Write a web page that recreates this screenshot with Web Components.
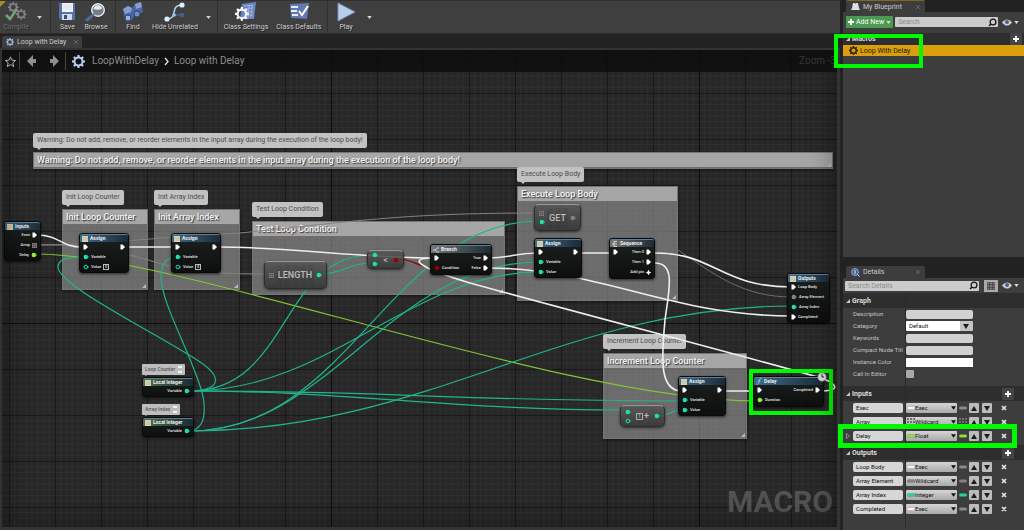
<!DOCTYPE html>
<html lang="en">
<head>
<meta charset="utf-8">
<title>Loop with Delay</title>
<style>
html, body { margin: 0; height: 100%; }
body { background: #222; color: #c4c4c4; font: 7px/10px Roboto, "Liberation Sans", sans-serif; overflow: hidden; }
</style>
</head>
<body>
<bp-editor></bp-editor>
<script>
const gearPath = 'M6.8 0h2.4l.4 2.2 1.5.6L13 1.5 14.600 3.1 13.300 4.900l.6 1.500 2.100.4v2.400l-2.200.4-.6 1.500 1.300 1.900-1.700 1.600-1.800-1.300-1.500.6-.4 2.100H6.800l-.4-2.200-1.500-.6L3 14.500 1.400 12.900l1.300-1.800-.6-1.500L0 9.200V6.800l2.200-.4.6-1.500L1.500 3 3.100 1.400l1.800 1.300 1.500-.6zM8 4.300a3.700 3.700 0 1 0 0 7.400 3.700 3.700 0 0 0 0-7.400z';
const svg = (w, h, box, body) => `<svg width="${w}" height="${h}" viewBox="${box}" aria-hidden="true">${body}</svg>`;
const icons = {
  gear: (s, c) => svg(s, s, '0 0 16 16', `<path fill="${c}" fill-rule="evenodd" d="${gearPath}"/>`),
  compile: () => svg(22, 20, '0 0 22 20', `<g fill="#858585" fill-rule="evenodd"><path transform="translate(3 0) scale(.66)" d="${gearPath}"/><path transform="translate(11 7) scale(.66)" d="${gearPath}"/></g><path d="M1 13l4 4L12 7" fill="none" stroke="#75a078" stroke-width="2.500"/>`),
  save: () => svg(18, 20, '0 0 18 20', '<path d="M1 1h16v17H3l-2-2z" fill="#5472ac"/><path d="M4 1h11v9H4z" fill="#f3f5f8"/><path d="M5 3h9M5 5h9M5 7h9" stroke="#c9cfda" stroke-width=".6"/><path d="M4 12h10v6H4z" fill="#d5dbe6"/><path d="M6 13h3v4H6z" fill="#38517f"/>'),
  browse: () => svg(22, 20, '0 0 22 20', '<circle cx="13" cy="8" r="7.500" fill="#111"/><circle cx="13" cy="8" r="6.300" fill="#777d87" stroke="#e8edf5" stroke-width="1.500"/><path d="M8.500 7a4.600 4.600 0 0 1 8.800-.8c-3 2-6 2-8.800.8z" fill="#e4e8ee"/><path d="M8 13l-6 5" stroke="#4f68a0" stroke-width="3" stroke-linecap="round"/>'),
  find: () => svg(22, 20, '0 0 22 20', '<path d="M1 7l5-3 4 2 3-4 6-2 2 10-3 2-4-1-2 3-2 4-4 2-3-2z" fill="#4966a5"/><path d="M1 7l5-3 4 2-1 4-6 2zM13 2l6-2 1 5-6 2z" fill="#849ed1"/><circle cx="6" cy="16" r="3" fill="#9bb2dc" stroke="#2b4272"/><circle cx="15" cy="12" r="3" fill="#718dc4" stroke="#2b4272"/>'),
  hide: () => svg(22, 20, '0 0 22 20', '<path d="M3 17c12 0 2-14 15-14" fill="none" stroke="#a9d5ef" stroke-width="1.500"/><path d="M11 13h7" stroke="#45628d" stroke-width="1.500"/><circle cx="3" cy="17" r="2.600" fill="#dcefff"/><circle cx="18" cy="3" r="2.600" fill="#dcefff"/><circle cx="18" cy="13" r="2.300" fill="#415e92"/><circle cx="10" cy="13" r="1.800" fill="#9bc6e8"/>'),
  settings: () => svg(22, 20, '0 0 22 20', `<path d="M7 2l14-2-2 17H5z" fill="#6985c0"/><path d="M9 4l9-1M9 7l9-1M14 3l-1 13M17 3l-1 13M9 10h9M9 13h9" stroke="#a9bde4" stroke-width=".8"/><path transform="translate(0 5) scale(.86)" fill="#f6f8fb" fill-rule="evenodd" d="${gearPath}"/>`),
  defaults: () => svg(22, 20, '0 0 22 20', '<path d="M2 2l19-1-2 16-16-1z" fill="#6079ae"/><path d="M3 5h7M3 9h6M4 13h6" stroke="#e7ebf4" stroke-width="2"/><path d="M11 9l3 4 6-9" fill="none" stroke="#fff" stroke-width="2"/>'),
  play: () => svg(20, 20, '0 0 20 20', '<path d="M2 1l17 9L2 19z" fill="#b7cdea" stroke="#7893c0"/>'),
  down: () => svg(5, 3, '0 0 6 4', '<path d="M0 0h6L3 4z" fill="#d8d8d8"/>'),
  star: () => svg(11, 11, '0 0 24 24', '<path d="M12 2l3 7 8 .8-6 5.200 2 8-7-4.300L5 23l2-8-6-5.200L9 9z" fill="none" stroke="#c4c4c4" stroke-width="2"/>'),
  back: () => svg(10, 12, '0 0 10 12', '<path d="M0 6l6-6v4h3v4H6v4z" fill="#8e8e8e"/>'),
  forward: () => svg(10, 12, '0 0 10 12', '<path d="M10 6L4 0v4H1v4h3v4z" fill="#8e8e8e"/>'),
  chevron: () => svg(5, 9, '0 0 5 9', '<path d="M1 1l3 3.500L1 8" fill="none" stroke="#ddd" stroke-width="1.400"/>'),
  lens: () => svg(9, 9, '0 0 9 9', '<circle cx="5" cy="4" r="2.900" fill="none" stroke="#151515" stroke-width="1.300"/><path d="M3 6L1 8" stroke="#151515" stroke-width="1.500"/>'),
  eye: () => svg(10, 7, '0 0 10 7', '<path d="M0 3.500C3-.6 7-.6 10 3.500 7 7.600 3 7.600 0 3.500z" fill="#c9ced8"/><circle cx="5" cy="3" r="2" fill="#4b5f88"/>'),
  grid: () => svg(8, 8, '0 0 8 8', '<path d="M0 0h8v8H0zM0 2.500h8M0 5.500h8M2.500 0v8M5.500 0v8" fill="#777" stroke="#444" stroke-width=".7"/>'),
  book: () => svg(9, 8, '0 0 9 8', '<path d="M2 0h2l.5 1L5 0h2l1 5 1 2H0l1-2z" fill="#dedede"/>'),
  info: () => svg(9, 9, '0 0 9 9', '<circle cx="4" cy="4" r="3.500" fill="#3f62a8" stroke="#b8c7e4" stroke-width=".7"/><path d="M4 2v4M6.500 6.500l2 2" stroke="#e0e9ff"/>'),
  plus: () => svg(6, 6, '0 0 6 6', '<path d="M3 0v6M0 3h6" stroke="#fff" stroke-width="1.800"/>'),
  cross: () => svg(6, 6, '0 0 6 6', '<path d="M1 1l4 4M5 1L1 5" stroke="#e2e2e2" stroke-width="1.700"/>'),
  up: () => svg(6, 5, '0 0 6 5', '<path d="M0 5h6L3 0z" fill="#1c1c1c"/>'),
  dn: () => svg(6, 5, '0 0 6 5', '<path d="M0 0h6L3 5z" fill="#1c1c1c"/>'),
  open: () => svg(4, 4, '0 0 4 4', '<path d="M4 0v4H0z" fill="#c8c8c8"/>'),
  sheet: () => svg(6, 6, '0 0 6 6', '<path d="M0 0h6v6H0z" fill="#d9d3b4"/><path d="M0 2h6M0 4h6" stroke="#a8a48e" stroke-width=".4"/>'),
  branch: () => svg(6, 6, '0 0 6 6', '<path d="M6 1H4.500L2 3l2.500 2H6M0 3h2" fill="none" stroke="#ddd" stroke-width=".9"/>'),
  sequence: () => svg(6, 6, '0 0 6 6', '<path d="M2 0v6M0 3h5M2 .5h3M2 5.500h3" fill="none" stroke="#ddd" stroke-width=".9"/>'),
  func: () => svg(6, 7, '0 0 6 7', '<path d="M5.500 .6C3 0 3.500 3 3 4S2 6.800.5 6.300M1.500 3h3" fill="none" stroke="#8ecbff" stroke-width=".9"/>')
};
const pins = {
  exec: () => svg(5, 6, '0 0 5 6', '<path d="M.5.500h2L5 3 2.500 5.500h-2z" fill="#fff"/>'),
  dot: c => svg(6, 6, '0 0 6 6', `<circle cx="2.800" cy="3" r="2.200" fill="${c}"/><path d="M4.800 2L6 3 4.800 4z" fill="${c}"/>`),
  ring: c => svg(6, 6, '0 0 6 6', `<circle cx="2.800" cy="3" r="1.800" fill="none" stroke="${c}"/><path d="M4.800 2L6 3 4.800 4z" fill="${c}"/>`),
  array: () => svg(5, 5, '0 0 5 5', '<path d="M0 0h5v5H0z" fill="#8b8383"/><path d="M1.600 0v5M3.400 0v5M0 1.600h5M0 3.400h5" stroke="#444" stroke-width=".5"/>'),
  add: () => svg(5, 5, '0 0 5 5', '<circle cx="2.500" cy="2.500" r="1.600" fill="#fff"/><path d="M0 2.500h5M2.500 0v5" stroke="#fff" stroke-width=".8"/>')
};
const TEAL = '#1fe0ab', LIME = '#96ee3a', RED = '#980000', GREY = '#8b8080';
const pin = spec => {
  const [kind, colour] = spec.split(' ');
  return pins[kind](colour);
};

class Part extends HTMLElement {
  connectedCallback() {
    if (this.shadowRoot) return;
    this.attachShadow({ mode: 'open' }).innerHTML =
      `<style>*{box-sizing:border-box}svg{display:block;flex:none}button,input,select{font:inherit;margin:0;padding:0;border:0;color:inherit}${this.css()}</style>${this.html()}`;
  }
}

customElements.define('bp-tool', class extends Part {
  css() { return `:host{display:flex}
    button{display:flex;flex-direction:column;align-items:center;gap:1px;background:none;white-space:nowrap;line-height:9px;text-shadow:1px 1px #222;color:#cfcfcf}
    :host([off]) button{color:#727272}`; }
  html() { return `<button type="button">${icons[this.getAttribute('icon')]()}<slot></slot></button>`; }
});

customElements.define('bp-toolbar', class extends Part {
  css() { return `:host{display:flex;height:34px;background:#3f3f3f;border-bottom:1px solid #2d2d2d;border-top:1px solid #303030}
    .set{display:flex;align-items:center;justify-content:center;gap:8px;border-right:1px solid #303030}
    .set:nth-of-type(1){width:51px;position:relative;padding-right:5px}
    .set:nth-of-type(1)::before{content:"";position:absolute;left:0;top:0;border:3px solid;border-color:#a98c22 transparent transparent #a98c22}
    .set:nth-of-type(2){width:65px}.set:nth-of-type(3){width:102px}.set:nth-of-type(4){width:110px}
    .set:nth-of-type(5){border:0;gap:11px;padding-left:8px}
    .more{background:none;padding:4px 0;display:flex}`; }
  html() {
    const more = name => `<button class="more" type="button" aria-label="${name}">${icons.down()}</button>`;
    return `<div class="set"><bp-tool icon="compile" off>Compile</bp-tool>${more('Compile options')}</div>
    <div class="set"><bp-tool icon="save">Save</bp-tool><bp-tool icon="browse">Browse</bp-tool></div>
    <div class="set"><bp-tool icon="find">Find</bp-tool><bp-tool icon="hide">Hide Unrelated</bp-tool>${more('Hide options')}</div>
    <div class="set"><bp-tool icon="settings">Class Settings</bp-tool><bp-tool icon="defaults">Class Defaults</bp-tool></div>
    <div class="set"><bp-tool icon="play">Play</bp-tool>${more('Play options')}</div>`;
  }
});

customElements.define('bp-tab', class extends Part {
  css() { return `:host{display:flex;align-items:center;gap:3px;height:12px;padding:0 5px;background:#3d3d3d;border-radius:2px 2px 0 0;white-space:nowrap;color:#cacaca}
    span{flex:1}button{background:none;display:flex;opacity:.25}`; }
  html() { return `<slot name="icon"></slot><span><slot></slot></span><button type="button" aria-label="Close tab">${svg(4, 4, '0 0 4 4', '<path d="M0 0l4 4M4 0L0 4" stroke="#fff" stroke-width=".8"/>')}</button>`; }
});

customElements.define('bp-crumbs', class extends Part {
  css() { return `:host{display:flex;align-items:center;height:22px;background:rgba(12,12,12,.78);font-size:10px;line-height:22px;color:#8c8c8c;overflow:hidden;white-space:nowrap;padding-left:3px}
    button{background:none;display:flex}i{width:1px;height:18px;background:#444;margin:0 7px 0 3px}
    nav{display:flex;align-items:center;gap:5px;margin-left:7px}a{color:inherit;text-decoration:none}
    .hist{display:flex;gap:12px}.hist + i{margin:0 6px}span{margin-left:auto;padding-right:1px;color:#373737}`; }
  html() { return `<button type="button" aria-label="Favourite">${icons.star()}</button><i></i>
    <div class="hist"><button type="button" aria-label="Back">${icons.back()}</button><button type="button" aria-label="Forward">${icons.forward()}</button></div><i></i>
    ${icons.gear(13, '#b5ccf4')}<nav><a href="#asset">LoopWithDelay</a>${icons.chevron()}<a href="#graph">Loop with Delay</a></nav><span>Zoom -3</span>`; }
});

/* A comment region with its floating bubble. */
customElements.define('bp-comment', class extends Part {
  css() { return `:host{position:absolute}
    .box{height:100%;background:rgba(150,150,150,.62);border:1px solid rgba(125,125,125,.6);box-shadow:0 1px 3px #0008;position:relative}
    h2{margin:0;height:14px;padding:0 3px;background:#a6a6a6;font-size:9px;line-height:14px;font-weight:500;color:#f4f4f4;text-shadow:1px 1px 1px #333;white-space:nowrap}
    .box::after{content:"";position:absolute;right:1px;bottom:1px;border:2px solid;border-color:transparent #bbb #bbb transparent}
    .bubble{position:absolute;left:0;bottom:calc(100% + 4px);height:15px;padding:0 4px;border-radius:2px;background:#c2c2c2;color:#4c4c4c;line-height:15px;white-space:nowrap}
    .bubble::after{content:"";position:absolute;left:4px;top:100%;border:2px solid;border-color:#c2c2c2 transparent transparent}`; }
  html() { const t = this.getAttribute('text');
    return `<div class="bubble">${t}</div><div class="box"><h2>${t}</h2></div>`; }
});

/* A node: rows are "leftPin|leftLabel|rightLabel|rightPin", separated by ";". */
customElements.define('bp-node', class extends Part {
  css() { return `:host{position:absolute;border-radius:3px;background:linear-gradient(#1c201e,#0c0f0d);border:1px solid #0a0a0a;box-shadow:0 1px 3px #000a;font-size:4px;font-weight:500;color:#e4e4e4;white-space:nowrap}
    header{display:flex;align-items:center;gap:2px;height:8px;padding:0 2px;border-radius:2px 2px 0 0;background:linear-gradient(90deg,var(--tint,#3d6b8c),#1a2b36);border-top:1px solid #5f7f94;font-size:5px;line-height:7px;font-weight:700;color:#eee}
    .row{display:flex;align-items:center;gap:2px;height:10px;padding:0 3px;line-height:10px}.row s{flex:1}
    .field{border:1px solid #bbb;width:6px;height:6px;font-size:4px;line-height:4px;text-align:center}
    .note{position:absolute;left:-1px;bottom:calc(100% + 3px);display:flex;gap:3px;height:11px;padding:0 3px;border-radius:1px;background:#bdbdbd;color:#555;font-size:5px;line-height:11px}
    .note::after{content:"";position:absolute;left:3px;top:100%;border:1px solid;border-color:#bdbdbd transparent transparent}
    .note svg{margin-top:2px}
    .clock{position:absolute;right:-4px;top:-5px}`; }
  html() {
    const rows = this.getAttribute('rows').split(';').map(r => {
      const [lp, ll, rl, rp] = r.split('|');
      const field = ll.endsWith('#');
      return `<div class="row">${lp ? pin(lp) : ''}<span>${ll.replace('#', '')}</span>${field ? '<span class="field">0</span>' : ''}<s></s><span>${rl}</span>${rp ? pin(rp) : ''}</div>`;
    }).join('');
    const note = this.getAttribute('note');
    return `${note ? `<div class="note">${note}${svg(4, 7, '0 0 4 7', '<path d="M0 0h4v2H0zM0 5h4v2H0z" fill="#eef3f6"/>')}</div>` : ''}
      <header>${icons[this.getAttribute('icon')]()}${this.getAttribute('name')}</header>${rows}
      ${this.hasAttribute('latent') ? `<div class="clock">${svg(10, 10, '0 0 10 10', '<circle cx="5" cy="5" r="4.300" fill="#ddd" stroke="#777" stroke-width=".6"/><path d="M5 2v3h2" fill="none" stroke="#222"/>')}</div>` : ''}`;
  }
});

/* A compact node: a caption between two columns of pins. */
customElements.define('bp-compact', class extends Part {
  css() { return `:host{position:absolute;display:flex;align-items:center;justify-content:space-between;padding:1px 4px;border-radius:5px;border:1px solid #2c2c2c;border-top-color:#999;background:linear-gradient(#555d,#333d);box-shadow:0 1px 3px #0009;color:#bcbcbc;font-size:9px;line-height:12px}
    .pins{display:flex;flex-direction:column;gap:3px}
    b{font-weight:500}.one{border:1px solid #aaa;width:7px;height:7px;font-size:5px;line-height:5px;text-align:center}
    .mid{display:flex;align-items:center;gap:1px}
    .cells{background:repeating-linear-gradient(90deg,#0001 0 6px,#0000 6px 8px);padding:4px 2px}`; }
  html() {
    const col = name => `<div class="pins">${(this.getAttribute(name) || '').split(',').map(pin).join('')}</div>`;
    const cells = this.hasAttribute('cells') ? ' cells' : '';
    return `${col('in')}<div class="mid${cells}">${this.hasAttribute('field') ? '<span class="one">1</span>' : ''}<b>${this.getAttribute('text')}</b></div>${col('out')}`;
  }
});

customElements.define('bp-wires', class extends Part {
  css() { return ':host{position:absolute;left:0;top:0}svg{overflow:visible}'; }
  html() {
    const g = (c, w, list) => `<g stroke="${c}" stroke-width="${w}">${list.map(d => `<path d="${d}"/>`).join('')}</g>`;
    return `<svg width="840" height="530" fill="none" aria-hidden="true">
    ${g('#8a8080', 1, ['M37 245C90 245 150 238 240 233C350 222 400 213 538 213', 'M37 245C100 243 140 258 165 265C200 273 230 274 267 274'])}
    ${g('#6f6b6b', 1, ['M576 217C680 217 700 297 792 297'])}
    ${g('#82c636', 1.2, ['M36 254C180 254 560 401 758 401'])}
    ${g('#20b58c', 1.2, [
      'M187 391C222 391 224 377 197 360C150 330 58 285 58 267C58 258 70 257 84 257',
      'M187 431C210 431 206 400 198 380C186 345 161 300 161 277C161 264 166 257 176 257',
      'M190 391C290 391 280 255 372 255', 'M190 391C330 391 410 272 540 272',
      'M190 391C400 391 450 401 684 401', 'M190 391C350 391 450 410 626 410',
      'M190 431C350 431 390 221 540 221', 'M190 431C330 431 390 262 540 262',
      'M190 431C430 431 560 306 792 306',
      'M319 274C345 274 347 263 373 263', 'M657 416C672 416 668 410 684 410'])}
    ${g('#8b0000', 1.2, ['M397 259C416 259 416 268 436 268'])}
    ${g('#eee', 1.6, ['M37 235C60 235 60 247 82 247', 'M125 247H174', 'M217 247C290 247 360 258 434 258',
      'M488 258C510 258 515 253 538 253', 'M488 268C600 268 670 316 792 316', 'M578 253H613',
      'M655 253C715 253 720 287 792 287', 'M655 263C676 263 669 290 665 320C661 362 660 391 682 391',
      'M722 391H758', 'M820 391C840 391 838 385 824 379C800 371 560 308 470 283C430 271 400 258 434 258'])}
    </svg>`;
  }
});

customElements.define('bp-graph', class extends Part {
  css() { return `:host{display:block;position:relative;overflow:hidden;background:#272727}
    .grid{position:absolute;inset:0;width:100%;height:100%}
    bp-crumbs{position:relative;z-index:2}
    .mark{position:absolute;right:4px;bottom:8px;font-size:30px;line-height:34px;font-weight:700;color:#535353}
    .world{position:absolute;left:-2px;top:-50px;width:840px;height:530px}
    .hl{position:absolute;border:4px solid #00f800}
    .shade{position:absolute;inset:0;box-shadow:inset 0 0 30px #0006}`; }
  html() {
    const at = (x, y, w, h) => `style="left:${x}px;top:${y}px;width:${w}px;height:${h}px"`;
    const comments = [[33, 152, 800, 17, 'Warning: Do not add, remove, or reorder elements in the input array during the execution of the loop body!'],
      [62, 209, 86, 81, 'Init Loop Counter'], [154, 209, 86, 81, 'Init Array Index'], [252, 221, 253, 74, 'Test Loop Condition'],
      [517, 186, 161, 115, 'Execute Loop Body'], [603, 353, 144, 86, 'Increment Loop Counter']]
      .map(([x, y, w, h, t]) => `<bp-comment ${at(x, y, w, h)} text="${t}"></bp-comment>`).join('');
    const assign = hasField => `exec|||exec;dot ${TEAL}|Variable||;${hasField ? 'ring' : 'dot'} ${TEAL}|Value${hasField ? '#' : ''}||`;
    const green = '#4d7048', grey = '#777';
    const nodes = [
      [4, 221, 37, 40, 'sheet', 'Inputs', `||Exec|exec;||Array|array;||Delay|dot ${LIME}`],
      [79, 233, 50, 40, 'sheet', 'Assign', assign(true)], [171, 233, 50, 40, 'sheet', 'Assign', assign(true)],
      [430, 244, 62, 31, 'branch', 'Branch', `exec||True|exec;dot ${RED}|Condition|False|exec`, grey],
      [534, 238, 48, 40, 'sheet', 'Assign', assign(false)],
      [609, 238, 46, 41, 'sequence', 'Sequence', 'exec||Then 0|exec;||Then 1|exec;||Add pin|add', grey],
      [787, 273, 43, 50, 'sheet', 'Outputs', `exec|Loop Body||;dot ${GREY}|Array Element||;dot ${TEAL}|Array Index||;exec|Completed||`],
      [142, 377, 52, 20, 'sheet', 'Local Integer', `||Variable|dot ${TEAL}`, green, 'note="Loop Counter"'],
      [142, 417, 52, 20, 'sheet', 'Local Integer', `||Variable|dot ${TEAL}`, green, 'note="Array Index"'],
      [678, 376, 48, 40, 'sheet', 'Assign', assign(false)],
      [753, 376, 71, 31, 'func', 'Delay', `exec||Completed|exec;dot ${LIME}|Duration||`, '', 'latent']
    ].map(([x, y, w, h, i, n, r, tint, more]) => `<bp-node style="left:${x}px;top:${y}px;width:${w}px;height:${h}px${tint ? `;--tint:${tint}` : ''}" icon="${i}" name="${n}" rows="${r}" ${more || ''}></bp-node>`).join('');
    return `<svg class="grid" aria-hidden="true"><defs>
      <pattern id="minor" x="7" y="43" width="46" height="46" patternUnits="userSpaceOnUse" viewBox="0 0 8 8"><path d="M1 0v8M2 0v8M3 0v8M4 0v8M5 0v8M6 0v8M7 0v8M0 1h8M0 2h8M0 3h8M0 4h8M0 5h8M0 6h8M0 7h8" stroke="#2e2e2e" stroke-width=".17"/><path d="M0 0v8M0 0h8" stroke="#191919" stroke-width=".35"/></pattern>
      <pattern id="major" x="329" y="273" width="368" height="368" patternUnits="userSpaceOnUse"><path d="M0 0v368M0 0h368" stroke="#0e0e0e" stroke-width="2"/></pattern></defs>
      <rect width="100%" height="100%" fill="url(#minor)"/><rect width="100%" height="100%" fill="url(#major)"/></svg>
    <div class="mark">MACRO</div>
    <div class="world">${comments}<bp-wires></bp-wires>${nodes}
      <bp-compact ${at(264, 261, 63, 28)} in="array" out="dot ${TEAL}" text="LENGTH" cells></bp-compact>
      <bp-compact ${at(367, 250, 37, 19)} in="dot ${TEAL},dot ${TEAL}" out="dot ${RED}" text="&lt;"></bp-compact>
      <bp-compact ${at(534, 204, 47, 27)} in="array,dot ${TEAL}" out="dot ${GREY}" text="GET" cells></bp-compact>
      <bp-compact ${at(620, 405, 45, 22)} in="dot ${TEAL},ring ${TEAL}" out="dot ${TEAL}" text="+" field></bp-compact>
      <div class="hl" ${at(749, 369, 84, 46)}></div></div>
    <div class="shade"></div><bp-crumbs></bp-crumbs>`;
  }
});

customElements.define('bp-search', class extends Part {
  css() { return `:host{display:flex;flex:1;min-width:0;height:10px;background:#cbcbcb;border-radius:1px;align-items:center;padding:0 1px 0 3px}
    input{flex:1;min-width:0;height:10px;background:none;color:#333;outline:0}input::placeholder{color:#8b8b8b;opacity:1}`; }
  html() { const t = this.getAttribute('hint'); return `<input type="search" placeholder="${t}" aria-label="${t}">${icons.lens()}`; }
});

customElements.define('bp-section', class extends Part {
  css() { return `:host{display:block}
    h3{display:flex;align-items:center;gap:2px;margin:0;height:var(--head,15px);padding:0 var(--end,10px) 0 3px;background:#2e2e2e;font-size:7px;font-weight:700;color:#ddd}
    h3 span{flex:1}button{background:#444;display:flex;padding:3px;height:12px;align-items:center;border-radius:1px}`; }
  html() { return `<h3>${icons.open()}<span>${this.getAttribute('name')}</span>${this.hasAttribute('add') ? `<button type="button" aria-label="Add">${icons.plus()}</button>` : ''}</h3><slot></slot>`; }
});

customElements.define('bp-prop', class extends Part {
  css() { return `:host{display:grid;grid-template-columns:52px 67px;column-gap:1px;align-items:center;height:12px;padding-left:10px;font-size:6px}
    label{white-space:nowrap}
    input{width:100%;height:9px;background:#d2d2d2;border-radius:2px}
    input[type=checkbox]{appearance:none;width:8px;height:8px;background:#a9a9a9;border-radius:1px}
    input.white{background:#fff;border-radius:0}
    div{display:flex}.pick{display:grid;flex:1;height:10px}.pick>*{grid-area:1/1}
    select{appearance:none;width:100%;height:10px;background:linear-gradient(90deg,#fff 0 54px,#c4c4c4 54px);color:#111;padding-left:3px;border-radius:1px}
    .pick svg{justify-self:end;align-self:center;margin-right:4px;pointer-events:none}`; }
  html() {
    const kind = this.getAttribute('kind');
    const field = { text: '<input id="f" type="text">', colour: '<input id="f" class="white" type="text">', check: '<input id="f" type="checkbox">',
      pick: `<div class="pick"><select id="f"><option>Default</option></select>${icons.dn()}</div>` }[kind];
    return `<label for="f">${this.getAttribute('name')}</label><div>${field}</div>`;
  }
});

customElements.define('bp-param', class extends Part {
  css() { return `:host{display:grid;grid-template-columns:50px 52px 8px 10px 11px 14px;column-gap:2px;align-items:center;height:14px;padding-left:10px;position:relative;font-size:6px}
    input{width:100%;height:10px;background:#d6d6d6;color:#111;border-radius:2px;padding-left:3px}
    .pick{display:grid;height:10px;margin-left:1px;align-items:center}.pick>*{grid-area:1/1}
    select{appearance:none;width:100%;height:10px;background:linear-gradient(#d5d5d5,#aaa);color:#111;padding-left:9px;border-radius:1px}
    .pick svg{pointer-events:none;margin-left:1px}.pick svg:last-child{justify-self:end;margin-right:1px}
    button{display:flex;align-items:center;justify-content:center;justify-self:end;width:10px;height:10px;background:#bcbcbc;border-radius:1px}
    button.del{background:none;width:8px}
    .fold{position:absolute;left:3px;top:4px}
    .hl{position:absolute;left:-5px;top:-5px;width:179px;height:24px;border:5px solid #00f800;z-index:3;pointer-events:none}`; }
  html() {
    const n = this.getAttribute('name'), t = this.getAttribute('type');
    const c = { Exec: '#f4f4f4', Wildcard: '#8b8080', Float: '#90e235', Integer: '#1fd5a4' }[t];
    const pill = colour => svg(8, 4, '0 0 8 4', `<rect width="8" height="3" y=".500" rx="1.500" fill="${colour}" stroke="#6669" stroke-width=".4"/>`);
    const mark = colour => this.hasAttribute('array') ? svg(8, 8, '0 0 8 8', '<path d="M1 0v8M4 0v8M7 0v8" stroke="#786e6e" stroke-width="2" stroke-dasharray="2 1"/>') : pill(colour);
    return `<input type="text" value="${n}" aria-label="Parameter name">
      <div class="pick"><select aria-label="${n} type"><option>${t}</option></select>${mark(c)}${svg(5, 4, '0 0 6 4', '<path d="M0 0h6L3 4z" fill="#111"/>')}</div>
      ${mark(t === 'Exec' ? '#8a8a8a' : c)}
      <button type="button" aria-label="Move up">${icons.up()}</button><button type="button" aria-label="Move down">${icons.dn()}</button><button class="del" type="button" aria-label="Remove">${icons.cross()}</button>
      ${this.hasAttribute('marked') ? `<div class="fold">${svg(4, 6, '0 0 4 6', '<path d="M.5.500L3.500 3l-3 2.500z" fill="none" stroke="#aaa" stroke-width=".7"/>')}</div><div class="hl"></div>` : ''}`;
  }
});

customElements.define('bp-sidebar', class extends Part {
  css() { return `:host{display:flex;flex-direction:column;position:relative;z-index:2}
    .panel{background:#3d3d3d}
    .blueprint{flex:0 0 245px;position:relative;--head:12px;--end:2px}
    .details{flex:1;position:relative}
    .tabs{display:flex;height:12px;padding-left:3px}.tabs bp-tab{width:79px}
    .tabs.first bp-tab{border-top:1px solid #7a6a1e}
    .tools{display:flex;align-items:center;gap:2px;height:20px;padding:0 5px 0 3px}
    .tools.low{height:15px;padding-left:2px}
    .add{display:flex;align-items:center;gap:2px;height:12px;padding:0 2px;background:#4a9a52;color:#fff;border-radius:1px;white-space:nowrap}
    .ghost{display:flex;align-items:center;gap:2px;background:none;margin-left:2px}
    .sq{display:flex;padding:2px 3px;background:#aaa;margin-left:3px}
    .item{display:flex;align-items:center;gap:2px;width:100%;height:11px;background:#dc9f0c;color:#1c1808;padding-left:6px}
    .hl{position:absolute;left:-9px;top:22px;width:89px;height:34px;border:4px solid #00f800}
    .gap{height:9px}.props{padding-bottom:6px}.sec{padding-bottom:2px}
    .macros{margin-top:1px}
    .details::after{content:"";position:absolute;left:62px;top:15px;width:1px;height:234px;background:#2a2a2a}`; }
  html() {
    const prop = (n, k) => `<bp-prop name="${n}" kind="${k}"></bp-prop>`;
    const param = (n, t, more = '') => `<bp-param name="${n}" type="${t}" ${more}></bp-param>`;
    return `<div class="tabs first"><bp-tab><span slot="icon">${icons.book()}</span>My Blueprint</bp-tab></div>
    <section class="panel blueprint"><div class="tools"><button class="add" type="button">${icons.plus()}Add New${icons.down()}</button><bp-search hint="Search"></bp-search><button class="ghost" type="button" aria-label="View options">${icons.eye()}${icons.down()}</button></div>
      <bp-section class="macros" name="Macros" add><button class="item" type="button">${icons.gear(9, '#2a1e05')}Loop With Delay</button></bp-section><div class="hl"></div></section>
    <div class="gap"></div>
    <div class="tabs"><bp-tab><span slot="icon">${icons.info()}</span>Details</bp-tab></div>
    <section class="panel details"><div class="tools low"><bp-search hint="Search Details"></bp-search><button class="sq" type="button" aria-label="Property matrix">${icons.grid()}</button><button class="ghost" type="button" aria-label="View options">${icons.eye()}${icons.down()}</button></div>
      <bp-section class="props" name="Graph">${prop('Description', 'text')}${prop('Category', 'pick')}${prop('Keywords', 'text')}${prop('Compact Node Titl', 'text')}${prop('Instance Color', 'colour')}${prop('Call In Editor', 'check')}</bp-section>
      <bp-section class="sec" name="Inputs" add>${param('Exec', 'Exec')}${param('Array', 'Wildcard', 'array')}${param('Delay', 'Float', 'marked')}</bp-section>
      <bp-section name="Outputs" add>${param('Loop Body', 'Exec')}${param('Array Element', 'Wildcard')}${param('Array Index', 'Integer')}${param('Completed', 'Exec')}</bp-section></section>`;
  }
});

customElements.define('bp-editor', class extends Part {
  css() { return `:host{display:grid;grid-template-columns:1fr 181px;column-gap:3px;height:100vh}
    main{display:flex;flex-direction:column;min-width:0}
    .tabs{display:flex;align-items:flex-end;height:14px;padding-left:2px}.tabs bp-tab{width:80px;padding:0 4px}
    .frame{flex:1;display:flex;padding:2px 3px 3px 2px;background:#333}
    bp-graph{flex:1}`; }
  html() { return `<main><bp-toolbar></bp-toolbar><div class="tabs"><bp-tab><span slot="icon">${icons.gear(8, '#9db9e8')}</span>Loop with Delay</bp-tab></div>
    <div class="frame"><bp-graph></bp-graph></div></main><bp-sidebar></bp-sidebar>`; }
});
</script>
</body>
</html>
